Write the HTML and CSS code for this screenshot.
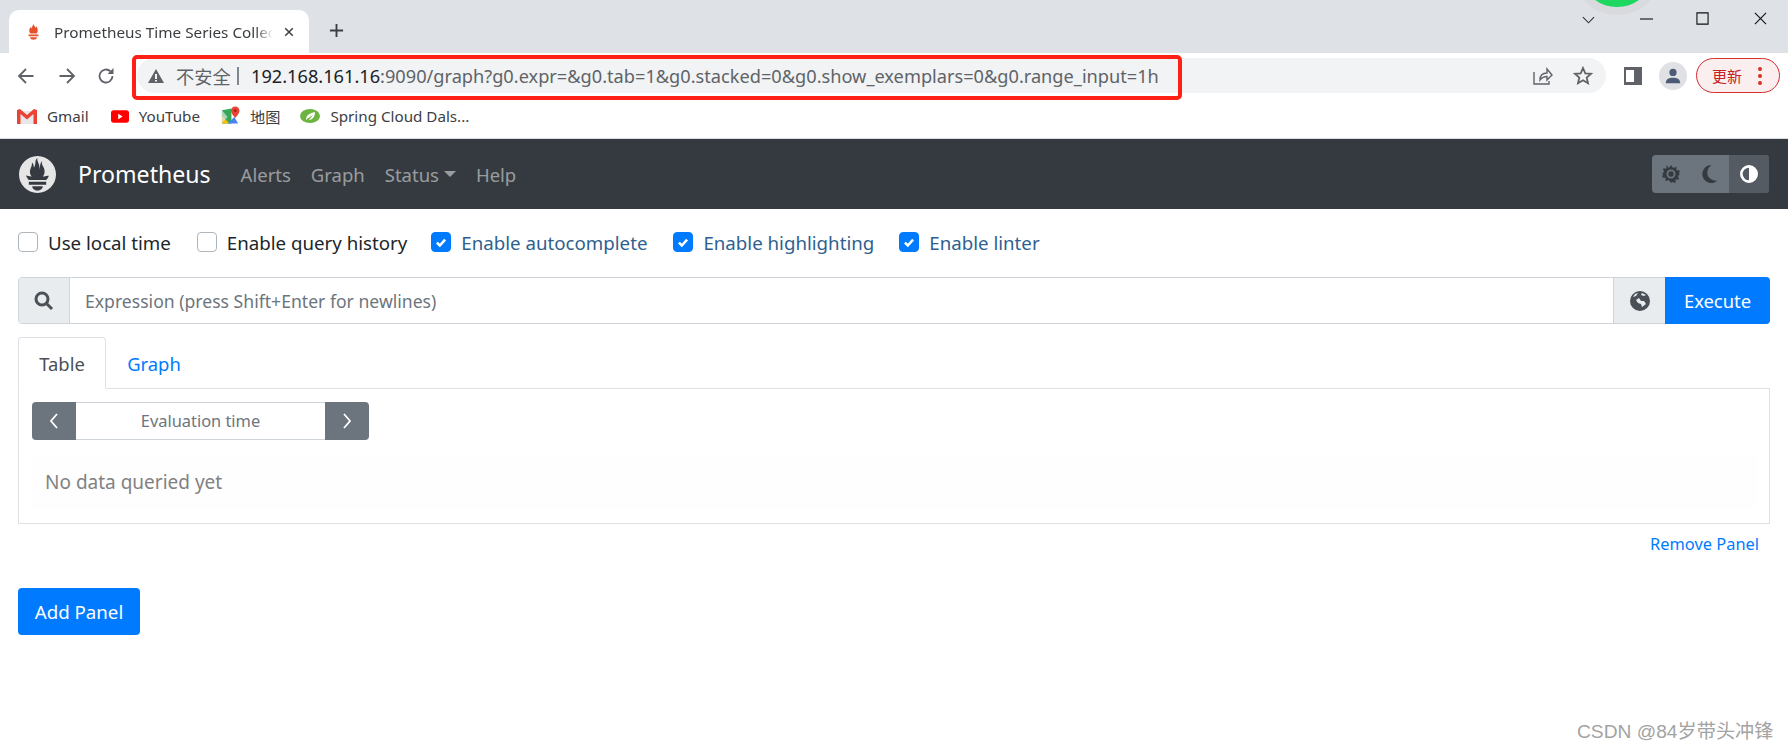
FILE: index.html
```html
<!DOCTYPE html>
<html lang="zh">
<head>
<meta charset="utf-8">
<title>Prometheus Time Series Collection and Processing Server</title>
<link rel="stylesheet" href="styles.css">
</head>
<body>
<div class="tabstrip">
  <div class="tab">
    <svg class="favicon" viewBox="0 0 24 24"><path fill="#e6522c" d="M12 1c.5 2 2.500 3 2.500 5 1-.5 1.500-2 1.500-2 1 2 2 3.500 2 6 0 1.500-.5 3-1.500 4H7.500C6.500 13 6 11.500 6 10c0-2 1-3.500 1.500-5 .5 1 1 1.500 1.500 2C10 5 10.500 3 12 1zM5 15.500h14V18H5zM7 19.500h10C16.500 22 14 23 12 23s-4.500-1-5-3.500z"/></svg>
    <span class="tab-title">Prometheus Time Series Collection</span>
    <svg class="tab-close" viewBox="0 0 12 12"><path d="M1.500 1.500l9 9M10.500 1.500l-9 9"/></svg>
  </div>
  <svg class="new-tab" viewBox="0 0 16 16"><path d="M8 1v14M1 8h14"/></svg>
  <div class="window-controls">
    <svg class="win-chevron" viewBox="0 0 14 8"><path d="M1 1l6 6 6-6"/></svg>
    <svg class="win-min" viewBox="0 0 14 2"><path d="M0 1h14"/></svg>
    <svg class="win-max" viewBox="0 0 14 14"><path d="M1 1h12v12H1z"/></svg>
    <svg class="win-close" viewBox="0 0 14 14"><path d="M1 1l12 12M13 1L1 13"/></svg>
  </div>
  <div class="green-blob"></div>
</div>

<div class="toolbar">
  <svg class="nav-back" viewBox="0 0 18 18"><path d="M16.500 9H2M9 2L2 9l7 7"/></svg>
  <svg class="nav-forward" viewBox="0 0 18 18"><path d="M1.500 9H16M9 2l7 7-7 7"/></svg>
  <svg class="nav-reload" viewBox="0 0 18 18"><path d="M15.500 9a6.500 6.500 0 1 1-2-4.700"/><path class="solid" d="M16.500 1v6h-6z"/></svg>
  <div class="omnibox">
    <svg class="warn" viewBox="0 0 16 14"><path d="M8 0l8 14H0zM7 5v5h2V5zm0 6v1.500h2V11z" fill-rule="evenodd"/></svg>
    <span class="insecure">不安全</span>
    <span class="omni-divider"></span>
    <span class="url"><span class="url-host">192.168.161.16</span>:9090/graph?g0.expr=&amp;g0.tab=1&amp;g0.stacked=0&amp;g0.show_exemplars=0&amp;g0.range_input=1h</span>
    <svg class="omni-share" viewBox="0 0 20 18"><path d="M1 5v12h15v-3M7 13c0-5 3-7 7-7V2l5 6-5 5V9.500c-3 0-5 1-7 3.500z"/></svg>
    <svg class="omni-star" viewBox="0 0 20 19"><path d="M10 2l2.300 5.300 5.700.5-4.300 3.800 1.300 5.600-5-3-5 3 1.300-5.600L2 7.800l5.700-.5z"/></svg>
  </div>
  <svg class="sidebar-icon" viewBox="0 0 18 18"><path fill-rule="evenodd" d="M0 0h18v18H0zM2 3v12h8V3z"/></svg>
  <div class="avatar"><svg viewBox="0 0 20 20"><circle cx="10" cy="6" r="4"/><path d="M2 18c0-4 3-6 8-6s8 2 8 6z"/></svg></div>
  <div class="update"><span class="update-text">更新</span><span class="update-dots"><i></i><i></i><i></i></span></div>
  <div class="url-highlight"></div>
</div>

<div class="bookmarks">
  <div class="bookmark bm-gmail">
    <svg viewBox="0 0 20 16"><path fill="#e8e8e8" d="M3 3h14v13H3z"/><path fill="#ea4335" d="M0 2l3-1 7 6 7-6 3 1v14h-3.500V6L10 11.500 3.500 6v10H0z"/></svg>
    <span>Gmail</span>
  </div>
  <div class="bookmark bm-youtube">
    <svg viewBox="0 0 20 14"><rect width="20" height="14" rx="3" fill="#f00"/><path fill="#fff" d="M8 4l5 3-5 3z"/></svg>
    <span>YouTube</span>
  </div>
  <div class="bookmark bm-maps">
    <svg viewBox="0 0 20 20"><path fill="#34a853" d="M1 4l10-2v16H1z"/><path fill="#fbbc04" d="M1 10l8 8H1z"/><path fill="#4285f4" d="M7 18l7-7 4 7z"/><path fill="#dfe4ea" d="M1 4l6 7-6 6z" opacity=".7"/><path fill="#ea4335" d="M15 0a4.500 4.500 0 0 1 4.500 4.500c0 3-4.500 7.500-4.500 7.500s-4.500-4.500-4.500-7.500A4.500 4.500 0 0 1 15 0z"/><circle cx="15" cy="4.500" r="1.500" fill="#a52714"/></svg>
    <span>地图</span>
  </div>
  <div class="bookmark bm-spring">
    <svg viewBox="0 0 20 14"><ellipse cx="10" cy="7" rx="10" ry="7" fill="#6db33f"/><path fill="#fff" d="M6 11c0-5 4-7 9-8 0 5-3 8-6 8 1-2 3-3 4-5-2 1-5 3-7 5z"/></svg>
    <span>Spring Cloud Dals...</span>
  </div>
</div>

<nav class="navbar">
  <svg class="logo" viewBox="0 0 24 24"><path fill="#e6e6e6" d="M12 0C5.373 0 0 5.372 0 12c0 6.627 5.373 12 12 12s12-5.373 12-12c0-6.628-5.373-12-12-12zm0 22.460c-1.885 0-3.414-1.260-3.414-2.814h6.828c0 1.553-1.528 2.813-3.414 2.813zm5.640-3.745H6.360v-2.046h11.280v2.046zm-.04-3.098H6.391c-.037-.043-.075-.086-.111-.13-1.155-1.401-1.427-2.133-1.690-2.879-.005-.025 1.400.287 2.395.511 0 0 .513.119 1.262.255-.72-.843-1.147-1.915-1.147-3.010 0-2.406 1.845-4.508 1.180-6.207.648.053 1.340 1.367 1.387 3.422.689-.951.977-2.690.977-3.755 0-1.103.727-2.385 1.454-2.429-.648 1.069.168 1.984.894 4.256.272.854.237 2.290.447 3.201.07-1.892.395-4.652 1.595-5.605-.529 1.200.079 2.702.494 3.424.671 1.164 1.078 2.047 1.078 3.716a4.642 4.642 0 0 1-1.110 2.996c.792-.149 1.340-.283 1.340-.283l2.573-.502s-.374 1.538-1.810 3.019z"/></svg>
  <span class="brand">Prometheus</span>
  <a class="nav-link">Alerts</a>
  <a class="nav-link">Graph</a>
  <a class="nav-link nav-status">Status<span class="caret"></span></a>
  <a class="nav-link">Help</a>
  <div class="theme-group">
    <span class="theme-btn"><svg viewBox="0 0 20 20"><path fill-rule="evenodd" d="M10 0l2.300 3.200 3.700-1.200.1 3.900 3.900.1-1.200 3.700L20 10l-2.200 2.300 1.200 3.700-3.900.1-.1 3.900-3.700-1.200L10 20l-2.300-3.200L4 18l-.1-3.900L0 14l1.200-3.700L0 10l2.200-2.300L1 4l3.900-.1L5 0l2.700 3.200zM10 5a5 5 0 1 0 0 10 5 5 0 0 0 0-10zm0 2a3 3 0 1 1 0 6 3 3 0 0 1 0-6z"/></svg></span>
    <span class="theme-btn"><svg viewBox="0 0 20 20"><path d="M11.500 0a10 10 0 1 0 6.800 17.300C12 18 7 14 7 9c0-4 2-7 4.500-9z"/></svg></span>
    <span class="theme-btn theme-active"><svg viewBox="0 0 20 20"><path fill-rule="evenodd" d="M10 0a10 10 0 1 1 0 20 10 10 0 0 1 0-20zm0 3a7 7 0 0 0 0 14z"/></svg></span>
  </div>
</nav>

<main class="page">
  <div class="options">
    <label class="option opt-local"><span class="box"></span>Use local time</label>
    <label class="option opt-history"><span class="box"></span>Enable query history</label>
    <label class="option opt-auto is-on"><span class="box"><svg viewBox="0 0 12 12"><path d="M2.500 6.500l2.500 2.500 4.500-5"/></svg></span>Enable autocomplete</label>
    <label class="option opt-high is-on"><span class="box"><svg viewBox="0 0 12 12"><path d="M2.500 6.500l2.500 2.500 4.500-5"/></svg></span>Enable highlighting</label>
    <label class="option opt-lint is-on"><span class="box"><svg viewBox="0 0 12 12"><path d="M2.500 6.500l2.500 2.500 4.500-5"/></svg></span>Enable linter</label>
  </div>

  <div class="query">
    <span class="addon addon-search"><svg viewBox="0 0 20 20"><circle cx="8" cy="8" r="6"/><path d="M12.500 12.500L18 18"/></svg></span>
    <span class="expr">Expression (press Shift+Enter for newlines)</span>
    <span class="addon addon-globe"><svg viewBox="0 0 20 20"><path fill="#495057" fill-rule="evenodd" d="M10 0a10 10 0 1 1 0 20 10 10 0 0 1 0-20zM3 6l3-1 2-3-3 1zM12 2l-1 2 3 1 2-1zM9 7L6 9l2 3 3 1 1 3 4-3-2-3-3 0z"/></svg></span>
    <button class="btn-execute">Execute</button>
  </div>

  <div class="tabs">
    <span class="tab-item tab-active">Table</span>
    <span class="tab-item tab-link">Graph</span>
  </div>
  <section class="tab-panel">
    <div class="eval-group">
      <span class="eval-btn"><svg viewBox="0 0 10 16"><path d="M8 1L2 8l6 7"/></svg></span>
      <span class="eval-input">Evaluation time</span>
      <span class="eval-btn"><svg viewBox="0 0 10 16"><path d="M2 1l6 7-6 7"/></svg></span>
    </div>
    <div class="alert">No data queried yet</div>
  </section>
  <div class="remove-row"><a class="remove">Remove Panel</a></div>
  <button class="btn-add">Add Panel</button>
</main>
<div class="watermark">CSDN @84岁带头冲锋</div>
</body>
</html>
```
FILE: styles.css
```css
* { box-sizing: border-box; }
html, body { margin: 0; padding: 0; }
body {
  width: 1788px;
  height: 749px;
  overflow: hidden;
  position: relative;
  background: #fff;
  font-family: "Noto Sans", "Noto Sans CJK SC", sans-serif;
  font-size: 18.400px;
  color: #212529;
}
svg { display: block; flex: none; }

/* browser tab strip */
.tabstrip {
  height: 53px;
  background: #dee1e6;
  display: flex;
  align-items: flex-end;
  position: relative;
  overflow: hidden;
  padding-left: 9px;
}
.tab {
  width: 300px;
  height: 43px;
  background: #fff;
  border-radius: 10px 10px 0 0;
  display: flex;
  align-items: center;
  padding-left: 16px;
}
.favicon { width: 17px; height: 20px; }
.tab-title {
  width: 219px;
  margin-left: 12px;
  font-size: 15.300px;
  color: #3c4043;
  white-space: nowrap;
  overflow: hidden;
  -webkit-mask-image: linear-gradient(90deg, #000 92%, transparent);
  mask-image: linear-gradient(90deg, #000 92%, transparent);
}
.tab-close { width: 10px; height: 10px; margin-left: 11px; fill: none; stroke: #3c4043; stroke-width: 1.800; }
.new-tab { width: 15px; height: 15px; margin: 0 0 15px 20px; fill: none; stroke: #3c4043; stroke-width: 2; }
.window-controls {
  margin-left: auto;
  height: 53px;
  display: flex;
  align-items: flex-start;
  padding-top: 12px;
}
.window-controls svg { fill: none; stroke: #111; stroke-width: 1.200; }
.win-chevron { width: 13px; height: 8px; margin-top: 4px; stroke: #333 !important; }
.win-min { width: 13px; height: 2px; margin: 6px 0 0 45px; }
.win-max { width: 13px; height: 13px; margin-left: 43px; }
.win-close { width: 13px; height: 13px; margin: 0 21px 0 45px; }
.green-blob {
  position: absolute;
  left: 1586px;
  top: -41px;
  width: 62px;
  height: 48px;
  border-radius: 50%;
  background: #1ed760;
  box-shadow: 0 0 0 8px #d8dadd;
}

/* browser toolbar */
.toolbar {
  height: 47px;
  display: flex;
  align-items: flex-start;
  position: relative;
  padding-left: 17px;
}
.toolbar > svg { margin-top: 14px; }
.nav-back, .nav-forward, .nav-reload { width: 18px; height: 18px; fill: none; stroke: #5f6368; stroke-width: 1.800; }
.nav-forward { margin-left: 23px; }
.nav-reload { margin-left: 21px; }
.nav-reload .solid { fill: #5f6368; stroke: none; }
.omnibox {
  width: 1469px;
  height: 35px;
  margin: 5px 0 0 22px;
  background: #f1f3f4;
  border-radius: 18px;
  display: flex;
  align-items: center;
  padding-left: 11px;
}
.warn { width: 16px; height: 14px; fill: #5f6368; }
.insecure { width: 61px; margin-left: 12px; font-size: 18.200px; color: #5f6368; font-family: "Noto Sans CJK SC", sans-serif; }
.omni-divider { width: 2px; height: 18px; background: #80868b; }
.url { width: 908px; margin-left: 12px; font-size: 18.200px; color: #5f6368; white-space: nowrap; }
.url-host { color: #202124; }
.omni-share { width: 20px; height: 18px; margin-left: 374px; fill: none; stroke: #5f6368; stroke-width: 1.400; }
.omni-star { width: 20px; height: 19px; margin-left: 20px; fill: none; stroke: #5f6368; stroke-width: 1.800; }
.sidebar-icon { width: 18px; height: 18px; margin-left: 18px; fill: #5f6368; margin-top: 14px; }
.avatar {
  width: 28px;
  height: 28px;
  margin: 9px 0 0 17px;
  border-radius: 50%;
  background: #dfe1e5;
  display: flex;
  align-items: center;
  justify-content: center;
}
.avatar svg { width: 18px; height: 18px; fill: #4b5a75; }
.update {
  width: 84px;
  height: 35px;
  margin: 5px 0 0 9px;
  border: 1px solid #d32f2f;
  border-radius: 18px;
  background: #faeeee;
  display: flex;
  align-items: center;
  padding-left: 15px;
}
.update-text { font-size: 15px; color: #c5221f; font-family: "Noto Sans CJK SC", sans-serif; }
.update-dots { display: flex; flex-direction: column; gap: 3px; margin-left: 16px; }
.update-dots i { width: 4px; height: 4px; border-radius: 50%; background: #d93025; }
.url-highlight {
  position: absolute;
  left: 132px;
  top: 2px;
  width: 1050px;
  height: 45px;
  border: 4px solid #ff2016;
  border-radius: 5px;
}

/* bookmarks */
.bookmarks {
  height: 39px;
  border-bottom: 1px solid #d8dadd;
  display: flex;
  align-items: center;
  font-size: 15.200px;
  color: #3c4043;
  padding: 0 0 6px 17px;
}
.bookmark { display: flex; align-items: center; }
.bookmark svg { margin-right: 10px; }
.bm-gmail svg { width: 20px; height: 16px; }
.bm-youtube { margin-left: 22px; }
.bm-youtube svg { width: 18px; height: 13px; }
.bm-maps { margin-left: 21px; }
.bm-maps svg { width: 19px; height: 20px; }
.bm-spring { margin-left: 20px; }
.bm-spring svg { width: 20px; height: 14px; }

/* navbar */
.navbar {
  height: 70px;
  background: #343a40;
  display: flex;
  align-items: center;
  padding: 0 19px;
}
.logo { width: 37px; height: 37px; }
.brand { margin: 0 30px 0 22px; font-size: 23.100px; color: #fff; }
.nav-link { margin-right: 20px; font-size: 18.500px; color: rgba(255, 255, 255, .5); }
.nav-status { display: flex; align-items: center; }
.caret {
  margin-left: 5px;
  border-top: 6px solid rgba(255, 255, 255, .5);
  border-left: 6px solid transparent;
  border-right: 6px solid transparent;
}
.theme-group {
  margin-left: auto;
  width: 117px;
  height: 38px;
  display: flex;
  border-radius: 4px;
  overflow: hidden;
  background: #6c757d;
}
.theme-btn { flex: 1; display: flex; align-items: center; justify-content: center; }
.theme-btn svg { width: 18px; height: 18px; fill: #343a40; }
.theme-active { background: #545b62; flex: 0 0 40px; }
.theme-active svg { fill: #fff; }

/* page */
.page { padding: 0 18px; }
.options {
  height: 68px;
  padding-bottom: 2px;
  display: flex;
  align-items: center;
  font-size: 18.700px;
}
.option { display: flex; align-items: center; white-space: nowrap; }
.is-on { color: #2f5f8f; }
.box {
  width: 20px;
  height: 20px;
  margin-right: 10px;
  border: 1px solid #adb5bd;
  border-radius: 4px;
  background: #fff;
  display: flex;
  align-items: center;
  justify-content: center;
}
.is-on .box { background: #007bff; border-color: #007bff; }
.box svg { width: 14px; height: 14px; fill: none; stroke: #fff; stroke-width: 2.200; }
.opt-history { margin-left: 26px; }
.opt-auto { margin-left: 24px; }
.opt-high { margin-left: 26px; }
.opt-lint { margin-left: 25px; }

.query {
  height: 47px;
  display: flex;
  border: 1px solid #ced4da;
  border-radius: 4px;
}
.addon {
  background: #e9ecef;
  display: flex;
  align-items: center;
  justify-content: center;
}
.addon-search { width: 51px; border-right: 1px solid #ced4da; border-radius: 3px 0 0 3px; }
.addon-search svg { width: 20px; height: 20px; fill: none; stroke: #495057; stroke-width: 3; }
.expr { flex: 1; padding-left: 15px; font-size: 17.600px; line-height: 46px; color: #6c757d; }
.addon-globe { width: 52px; border-left: 1px solid #ced4da; }
.addon-globe svg { width: 20px; height: 20px; }
.btn-execute, .btn-add {
  background: #007bff;
  color: #fff;
  border: 0;
  font: inherit;
  padding: 0;
}
.btn-execute { width: 105px; margin: -1px -1px -1px 0; border-radius: 0 4px 4px 0; }

.tabs {
  height: 51px;
  margin-top: 13px;
  display: flex;
  position: relative;
  z-index: 1;
}
.tab-item { display: flex; align-items: center; justify-content: center; height: 52px; }
.tab-active {
  width: 88px;
  color: #495057;
  background: #fff;
  border: 1px solid #dee2e6;
  border-bottom-color: #fff;
  border-radius: 4px 4px 0 0;
}
.tab-link { width: 96px; color: #007bff; }
.tab-panel {
  height: 136px;
  border: 1px solid #dee2e6;
  padding: 13px 13px 0;
}
.eval-group { display: flex; width: 337px; height: 38px; }
.eval-btn {
  width: 44px;
  background: #6c757d;
  display: flex;
  align-items: center;
  justify-content: center;
}
.eval-btn:first-child { border-radius: 4px 0 0 4px; }
.eval-btn:last-child { border-radius: 0 4px 4px 0; }
.eval-btn svg { width: 10px; height: 16px; fill: none; stroke: #fff; stroke-width: 1.800; }
.eval-input {
  flex: 1;
  text-align: center;
  font-size: 16.400px;
  line-height: 36px;
  color: #6c757d;
  border-top: 1px solid #ced4da;
  border-bottom: 1px solid #ced4da;
}
.alert {
  margin-top: 15px;
  height: 53px;
  padding-left: 12px;
  font-size: 19px;
  line-height: 53px;
  color: #818182;
  background: #fefefe;
  border: 1px solid #fdfdfe;
}
.remove-row { display: flex; justify-content: flex-end; padding: 9px 11px 0 0; height: 64px; }
.remove { font-size: 16.400px; line-height: 22px; color: #007bff; }
.btn-add { display: block; width: 122px; height: 47px; border-radius: 4px; font-size: 18.700px; }

.watermark {
  position: absolute;
  left: 1577px;
  top: 716px;
  font-family: "Liberation Sans", "Noto Sans CJK SC", sans-serif;
  font-size: 19.200px;
  color: #a3a3a3;
  white-space: nowrap;
}
```
